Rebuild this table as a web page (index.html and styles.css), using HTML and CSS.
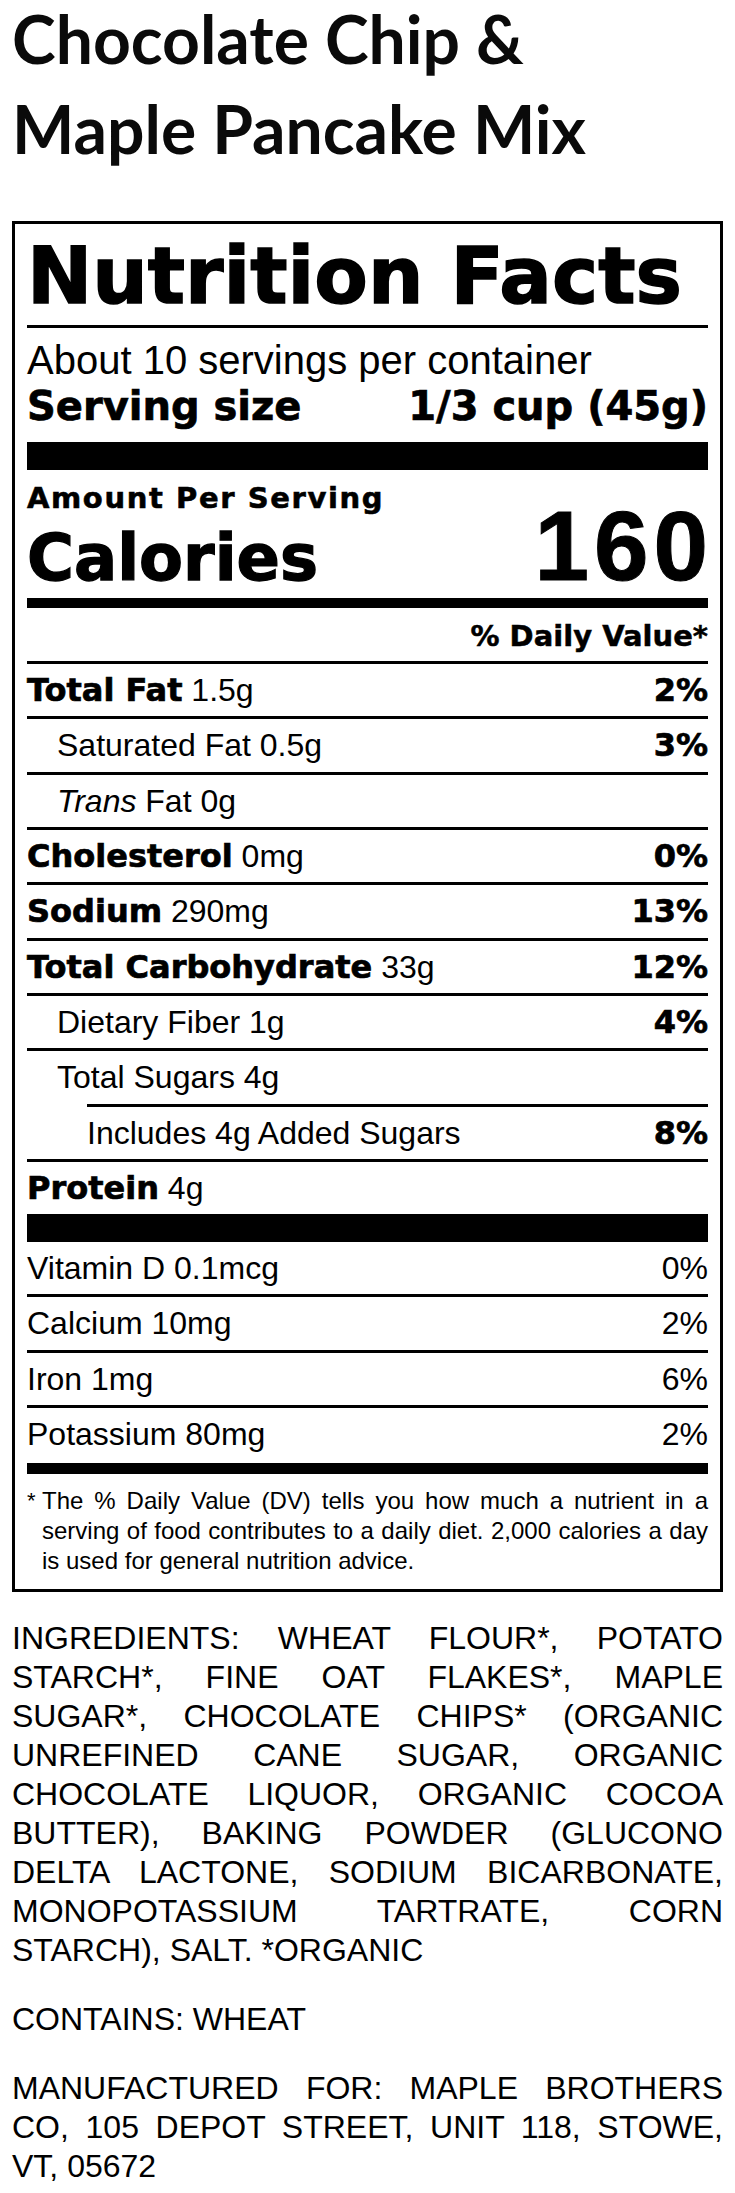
FILE: index.html
```html
<!DOCTYPE html>
<html lang="en">
<head>
<meta charset="utf-8">
<title>Chocolate Chip &amp; Maple Pancake Mix</title>
<link rel="stylesheet" href="styles.css">
</head>
<body>
<h1 class="product-title">Chocolate Chip &amp;<br>Maple Pancake Mix</h1>

<section class="label">
  <header class="nf-head">Nutrition Facts</header>
  <div class="servings">About 10 servings per container</div>
  <div class="serving-size"><span>Serving size</span><span>1/3 cup (45g)</span></div>
  <div class="bar bar-thick"></div>

  <div class="amount">Amount Per Serving</div>
  <div class="calories"><span class="cal-label">Calories</span><span class="cal-value">160</span></div>
  <div class="bar bar-mid"></div>

  <div class="dv-head">% Daily Value*</div>

  <div class="row"><span><b>Total Fat</b> 1.5g</span><b class="pct">2%</b></div>
  <div class="row ind1"><span>Saturated Fat 0.5g</span><b class="pct">3%</b></div>
  <div class="row ind1"><span><i>Trans</i> Fat 0g</span></div>
  <div class="row"><span><b>Cholesterol</b> 0mg</span><b class="pct">0%</b></div>
  <div class="row"><span><b>Sodium</b> 290mg</span><b class="pct">13%</b></div>
  <div class="row"><span><b>Total Carbohydrate</b> 33g</span><b class="pct">12%</b></div>
  <div class="row ind1"><span>Dietary Fiber 1g</span><b class="pct">4%</b></div>
  <div class="row ind1 no-rule"><span>Total Sugars 4g</span></div>
  <div class="rule-partial"></div>
  <div class="row ind2"><span>Includes 4g Added Sugars</span><b class="pct">8%</b></div>
  <div class="row no-rule"><span><b>Protein</b> 4g</span></div>
  <div class="bar bar-thick bar-vit"></div>

  <div class="row vit"><span>Vitamin D 0.1mcg</span><span>0%</span></div>
  <div class="row vit"><span>Calcium 10mg</span><span>2%</span></div>
  <div class="row vit"><span>Iron 1mg</span><span>6%</span></div>
  <div class="row vit no-rule"><span>Potassium 80mg</span><span>2%</span></div>
  <div class="bar bar-foot"></div>

  <div class="footnote"><span class="star">*</span><p>The % Daily Value (DV) tells you how much a nutrient in a serving of food contributes to a daily diet. 2,000 calories a day is used for general nutrition advice.</p></div>
</section>

<section class="info">
  <p>INGREDIENTS: WHEAT FLOUR*, POTATO STARCH*, FINE OAT FLAKES*, MAPLE SUGAR*, CHOCOLATE CHIPS* (ORGANIC UNREFINED CANE SUGAR, ORGANIC CHOCOLATE LIQUOR, ORGANIC COCOA BUTTER), BAKING POWDER (GLUCONO DELTA LACTONE, SODIUM BICARBONATE, MONOPOTASSIUM TARTRATE, CORN STARCH), SALT. *ORGANIC</p>
  <p>CONTAINS: WHEAT</p>
  <p>MANUFACTURED FOR: MAPLE BROTHERS CO, 105 DEPOT STREET, UNIT 118, STOWE, VT, 05672</p>
</section>
</body>
</html>
```

FILE: styles.css
```css
html, body {
  margin: 0;
  padding: 0;
  background: #fff;
  color: #000;
}

body {
  padding: 0 12px 10px;
  font-family: "Liberation Sans", Arial, sans-serif;
}

.product-title {
  margin: -6px 0 48px;
  font-family: Lato, "Open Sans", sans-serif;
  font-weight: 700;
  font-size: 66px;
  line-height: 89.6px;
  color: #0a0a0a;
}

.label {
  border: 3px solid #000;
  padding: 13px 12px 13px;
}

.nf-head {
  font-family: "DejaVu Sans", sans-serif;
  font-weight: 700;
  font-size: 78px;
  line-height: 78px;
  -webkit-text-stroke: 1.5px #000;
  padding-bottom: 10px;
  border-bottom: 3px solid #000;
  white-space: nowrap;
}

.servings {
  margin-top: 9px;
  font-size: 40px;
  line-height: 46px;
}

.serving-size {
  display: flex;
  justify-content: space-between;
  font-family: "DejaVu Sans", sans-serif;
  font-weight: 700;
  font-size: 40px;
  line-height: 46px;
  -webkit-text-stroke: 0.7px #000;
}

.bar {
  background: #000;
}

.bar-thick {
  height: 28px;
  margin-top: 13px;
}

.amount {
  margin-top: 13px;
  font-family: "DejaVu Sans", sans-serif;
  font-weight: 700;
  font-size: 29px;
  line-height: 30px;
  letter-spacing: 1.6px;
  -webkit-text-stroke: 0.6px #000;
}

.calories {
  display: flex;
  justify-content: space-between;
  align-items: baseline;
}

.cal-label {
  font-family: "DejaVu Sans", sans-serif;
  font-weight: 700;
  font-size: 64px;
  line-height: 66px;
  -webkit-text-stroke: 1.3px #000;
}

.cal-value {
  font-family: "Liberation Sans", Arial, sans-serif;
  font-weight: 700;
  font-size: 98px;
  line-height: 66px;
  letter-spacing: 5px;
  margin-right: -5px;
  -webkit-text-stroke: 1px #000;
}

.bar-mid {
  height: 10px;
  margin-top: 7px;
}

.dv-head {
  text-align: right;
  padding: 11px 0 8px;
  border-bottom: 3px solid #000;
  font-family: "DejaVu Sans", sans-serif;
  font-weight: 700;
  font-size: 29px;
  line-height: 34px;
  -webkit-text-stroke: 0.5px #000;
}

.row {
  display: flex;
  justify-content: space-between;
  align-items: baseline;
  font-size: 32px;
  line-height: 52.3px;
  border-bottom: 3px solid #000;
  white-space: nowrap;
}

.row b {
  font-family: "DejaVu Sans", sans-serif;
  font-weight: 700;
  -webkit-text-stroke: 0.7px #000;
}

.row.no-rule {
  border-bottom: none;
}

.row.ind1 {
  padding-left: 30px;
}

.row.ind2 {
  padding-left: 60px;
}

.rule-partial {
  height: 3px;
  margin-left: 60px;
  background: #000;
}

.bar-vit {
  margin-top: 0;
}

.bar-foot {
  height: 11px;
  margin-top: 3px;
}

.footnote {
  display: flex;
  padding-top: 12px;
  font-size: 24px;
  line-height: 30px;
}

.footnote .star {
  flex: 0 0 15px;
  font-size: 22px;
}

.footnote p {
  margin: 0;
  flex: 1;
  text-align: justify;
}

.info {
  margin-top: 27px;
}

.info p {
  margin: 0 0 30px;
  font-size: 32px;
  line-height: 39px;
  text-align: justify;
}

.info p:last-child {
  margin-bottom: 0;
}
```
